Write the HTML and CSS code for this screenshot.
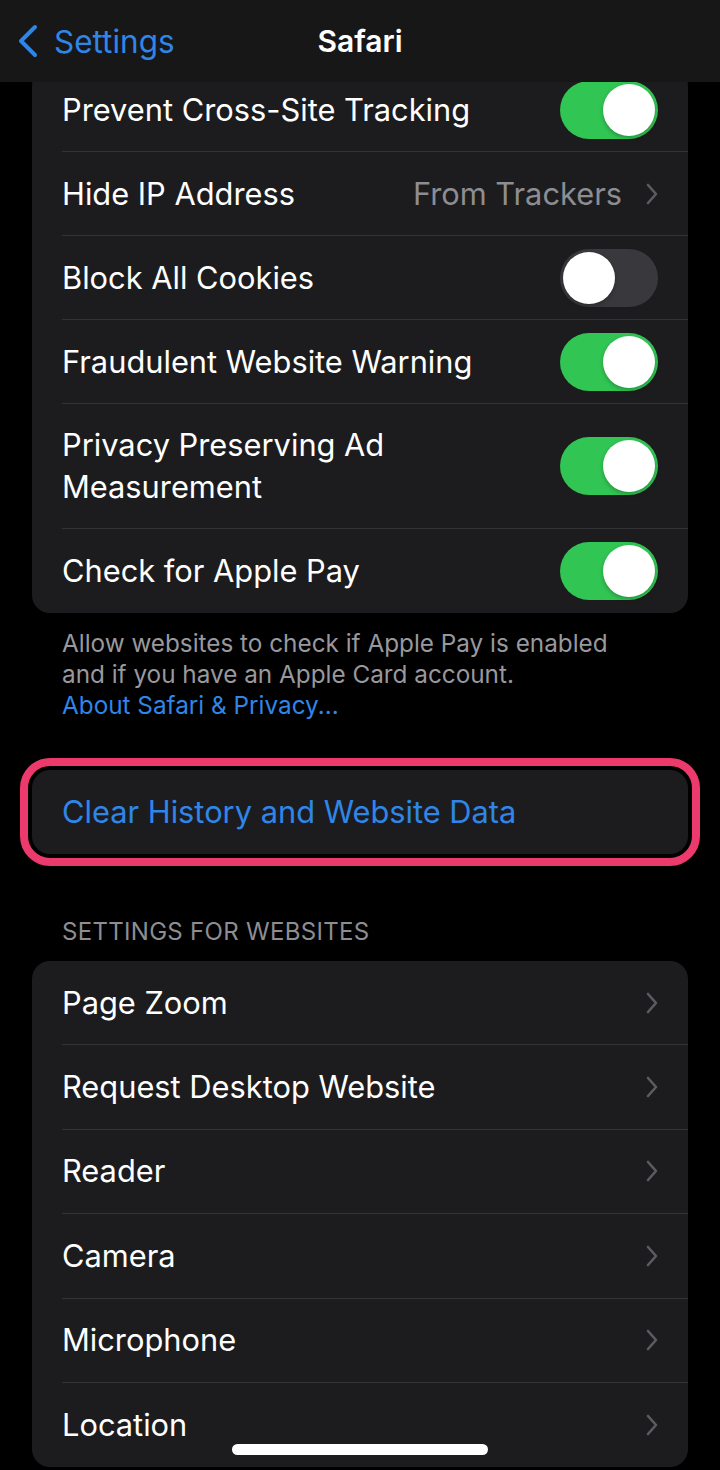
FILE: index.html
```html
<!DOCTYPE html>
<html lang="en">
<head>
    <meta charset="UTF-8">
    <meta name="viewport" content="width=device-width, initial-scale=1.0">
    <title>Safari</title>
    <link rel="stylesheet" href="styles.css">
</head>
<body>
    <div class="screen">
        <header class="nav-bar">
            <a class="nav-back" href="#">
                <svg class="back-chevron" width="24" height="34" viewBox="0 0 24 34">
                    <polyline points="19,3 5,17 19,31" fill="none" stroke="#2f86e8" stroke-width="4" stroke-linecap="round" stroke-linejoin="round"/>
                </svg>
                <span>Settings</span>
            </a>
            <h1 class="nav-title">Safari</h1>
            <div></div>
        </header>

        <main class="content">
            <section class="group first-group">
                <div class="row">
                    <div class="row-body">
                        <span class="row-label">Prevent Cross-Site Tracking</span>
                        <span class="switch on"><span class="knob"></span></span>
                    </div>
                </div>
                <div class="row">
                    <div class="row-body">
                        <span class="row-label">Hide IP Address</span>
                        <span class="row-value">From Trackers</span>
                        <svg class="chevron" width="14" height="24" viewBox="0 0 14 24">
                            <polyline points="3,3 11,12 3,21" fill="none" stroke="#5c5c60" stroke-width="2.6" stroke-linecap="round" stroke-linejoin="round"/>
                        </svg>
                    </div>
                </div>
                <div class="row">
                    <div class="row-body">
                        <span class="row-label">Block All Cookies</span>
                        <span class="switch"><span class="knob"></span></span>
                    </div>
                </div>
                <div class="row">
                    <div class="row-body">
                        <span class="row-label">Fraudulent Website Warning</span>
                        <span class="switch on"><span class="knob"></span></span>
                    </div>
                </div>
                <div class="row">
                    <div class="row-body">
                        <span class="row-label">Privacy Preserving Ad<br>Measurement</span>
                        <span class="switch on"><span class="knob"></span></span>
                    </div>
                </div>
                <div class="row">
                    <div class="row-body">
                        <span class="row-label">Check for Apple Pay</span>
                        <span class="switch on"><span class="knob"></span></span>
                    </div>
                </div>
            </section>
            <p class="group-footer">
                Allow websites to check if Apple Pay is enabled<br>
                and if you have an Apple Card account.<br>
                <a href="#">About Safari &amp; Privacy...</a>
            </p>

            <section class="group highlighted">
                <div class="row">
                    <div class="row-body">
                        <span class="row-label action">Clear History and Website Data</span>
                    </div>
                </div>
            </section>

            <h2 class="group-header">SETTINGS FOR WEBSITES</h2>
            <section class="group websites">
                <div class="row">
                    <div class="row-body">
                        <span class="row-label">Page Zoom</span>
                        <svg class="chevron" width="14" height="24" viewBox="0 0 14 24"><polyline points="3,3 11,12 3,21" fill="none" stroke="#5c5c60" stroke-width="2.6" stroke-linecap="round" stroke-linejoin="round"/></svg>
                    </div>
                </div>
                <div class="row">
                    <div class="row-body">
                        <span class="row-label">Request Desktop Website</span>
                        <svg class="chevron" width="14" height="24" viewBox="0 0 14 24"><polyline points="3,3 11,12 3,21" fill="none" stroke="#5c5c60" stroke-width="2.6" stroke-linecap="round" stroke-linejoin="round"/></svg>
                    </div>
                </div>
                <div class="row">
                    <div class="row-body">
                        <span class="row-label">Reader</span>
                        <svg class="chevron" width="14" height="24" viewBox="0 0 14 24"><polyline points="3,3 11,12 3,21" fill="none" stroke="#5c5c60" stroke-width="2.6" stroke-linecap="round" stroke-linejoin="round"/></svg>
                    </div>
                </div>
                <div class="row">
                    <div class="row-body">
                        <span class="row-label">Camera</span>
                        <svg class="chevron" width="14" height="24" viewBox="0 0 14 24"><polyline points="3,3 11,12 3,21" fill="none" stroke="#5c5c60" stroke-width="2.6" stroke-linecap="round" stroke-linejoin="round"/></svg>
                    </div>
                </div>
                <div class="row">
                    <div class="row-body">
                        <span class="row-label">Microphone</span>
                        <svg class="chevron" width="14" height="24" viewBox="0 0 14 24"><polyline points="3,3 11,12 3,21" fill="none" stroke="#5c5c60" stroke-width="2.6" stroke-linecap="round" stroke-linejoin="round"/></svg>
                    </div>
                </div>
                <div class="row">
                    <div class="row-body">
                        <span class="row-label">Location</span>
                        <svg class="chevron" width="14" height="24" viewBox="0 0 14 24"><polyline points="3,3 11,12 3,21" fill="none" stroke="#5c5c60" stroke-width="2.6" stroke-linecap="round" stroke-linejoin="round"/></svg>
                    </div>
                </div>
            </section>
        </main>

        <div class="home-indicator"></div>
    </div>
</body>
</html>
```

FILE: styles.css
```css
body {
	margin: 0;
	background: #000;
	font-family: Inter, "Noto Sans", sans-serif;
	color: #fff;
}

.screen {
	position: relative;
	width: 720px;
	height: 1470px;
	overflow: hidden;
	background: #000;
}

/* top navigation, sits over the scrolled list */
.nav-bar {
	position: absolute;
	top: 0;
	left: 0;
	right: 0;
	height: 82px;
	z-index: 2;
	background: #171717;
	display: grid;
	grid-template-columns: 1fr auto 1fr;
	align-items: center;
}

.nav-back {
	display: flex;
	align-items: center;
	gap: 14px;
	padding-left: 16px;
	color: #2f86e8;
	text-decoration: none;
	font-size: 31.5px;
}

.back-chevron {
	display: block;
}

.nav-title {
	margin: 0;
	font-size: 30px;
	font-weight: 600;
	color: #fff;
}

.content {
	padding: 68px 32px 0;
}

.group {
	background: #1c1c1e;
	border-radius: 18px;
}

.row {
	padding-left: 30px;
}

.row-body {
	display: flex;
	align-items: center;
	min-height: 84px;
	padding-right: 30px;
	border-bottom: 1px solid #333335;
	box-sizing: border-box;
}

.websites .row-body {
	min-height: 84.4px;
}

.row:last-child .row-body {
	border-bottom: none;
}

.row-label {
	flex: 1;
	font-size: 30.8px;
	line-height: 42px;
	padding: 20px 0;
}

.row-label.action {
	color: #2f86e8;
}

.row-value {
	font-size: 30.8px;
	color: #8d8d92;
	margin-right: 23px;
}

.chevron {
	display: block;
	margin-right: -1px;
}

.switch {
	position: relative;
	width: 98px;
	height: 58px;
	border-radius: 29px;
	background: #39393d;
	flex-shrink: 0;
}

.switch.on {
	background: #31c553;
}

.knob {
	position: absolute;
	top: 3px;
	left: 3px;
	width: 52px;
	height: 52px;
	border-radius: 50%;
	background: #fff;
	box-shadow: 0 2px 4px rgba(0, 0, 0, 0.25);
}

.switch.on .knob {
	left: 43px;
}

.group-footer {
	margin: 0;
	padding: 15px 30px 0;
	font-size: 24.3px;
	line-height: 31px;
	color: #98989d;
}

.group-footer a {
	color: #2f86e8;
	text-decoration: none;
}

.highlighted {
	margin-top: 49px;
	outline: 8px solid #ec3a6c;
	outline-offset: 4px;
	border-radius: 18px;
}

.group-header {
	margin: 0;
	padding: 64px 30px 15px;
	font-size: 24px;
	font-weight: 400;
	letter-spacing: 0.3px;
	line-height: 28px;
	color: #8d8d92;
}

.home-indicator {
	position: absolute;
	left: 232px;
	bottom: 15px;
	width: 256px;
	height: 11px;
	border-radius: 6px;
	background: #fff;
}
```
